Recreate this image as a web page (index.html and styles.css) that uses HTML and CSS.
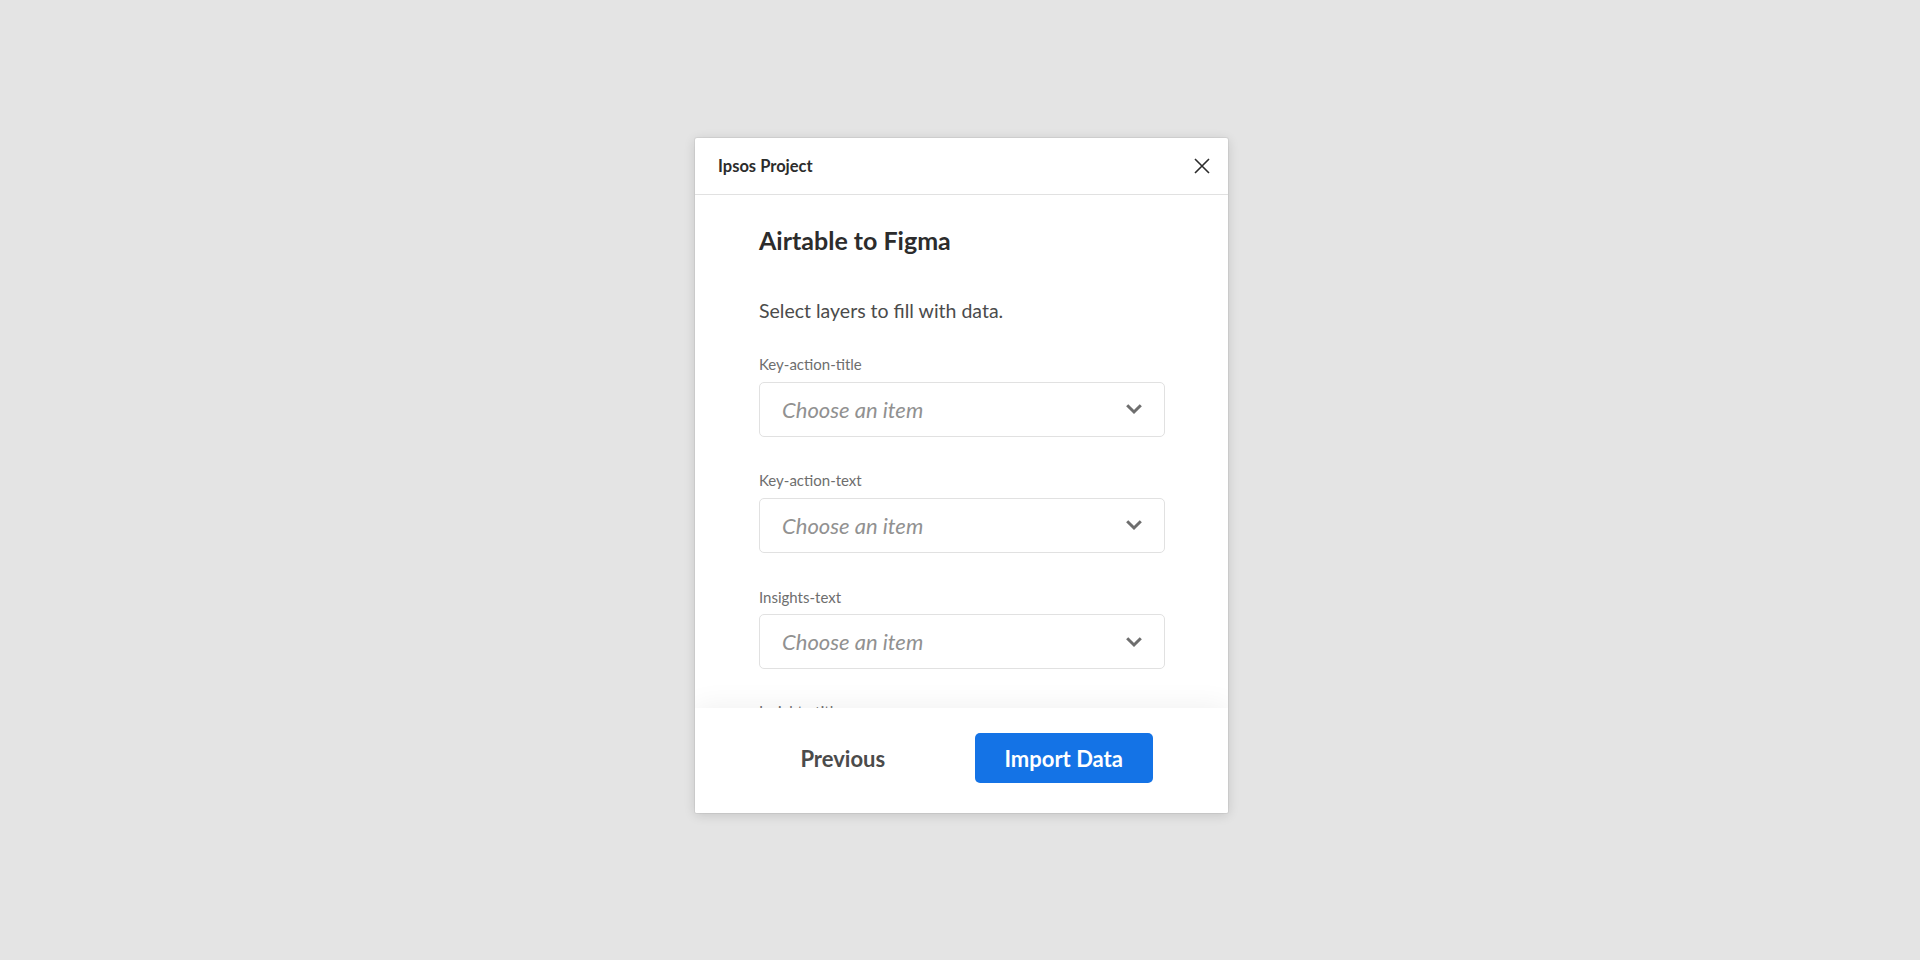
FILE: index.html
```html
<!DOCTYPE html>
<html lang="en">
<head>
<meta charset="utf-8">
<title>Airtable to Figma</title>
<link rel="stylesheet" href="styles.css">
</head>
<body>
<div class="stage">
  <div class="dialog">
    <div class="dialog-header">
      <span class="dialog-name">Ipsos Project</span>
      <button class="close-btn" aria-label="Close">
        <svg width="16" height="16" viewBox="0 0 16 16"><path d="M1 1 L15 15 M15 1 L1 15" stroke="#2c2c2c" stroke-width="1.6" fill="none"/></svg>
      </button>
    </div>
    <div class="dialog-body">
      <h1 class="title">Airtable to Figma</h1>
      <p class="intro">Select layers to fill with data.</p>
      <div class="field">
        <div class="label">Key-action-title</div>
        <div class="picker"><span class="placeholder">Choose an item</span><svg class="chev" width="18" height="12" viewBox="0 0 18 12"><path d="M2.2 2.2 L9 9 L15.8 2.2" stroke="#6e6e6e" stroke-width="3" fill="none" stroke-linejoin="miter"/></svg></div>
      </div>
      <div class="field">
        <div class="label">Key-action-text</div>
        <div class="picker"><span class="placeholder">Choose an item</span><svg class="chev" width="18" height="12" viewBox="0 0 18 12"><path d="M2.2 2.2 L9 9 L15.8 2.2" stroke="#6e6e6e" stroke-width="3" fill="none" stroke-linejoin="miter"/></svg></div>
      </div>
      <div class="field">
        <div class="label">Insights-text</div>
        <div class="picker"><span class="placeholder">Choose an item</span><svg class="chev" width="18" height="12" viewBox="0 0 18 12"><path d="M2.2 2.2 L9 9 L15.8 2.2" stroke="#6e6e6e" stroke-width="3" fill="none" stroke-linejoin="miter"/></svg></div>
      </div>
      <div class="field field-last">
        <div class="label">Insights-title</div>
      </div>
    </div>
    <div class="dialog-footer">
      <button class="btn btn-quiet">Previous</button>
      <button class="btn btn-primary">Import Data</button>
    </div>
  </div>
</div>
</body>
</html>
```
FILE: styles.css
```css
* { box-sizing: border-box; }
html, body { margin: 0; padding: 0; }
body {
  background: #e4e4e4;
  font-family: "Lato", "Open Sans", sans-serif;
  width: 1920px;
  height: 960px;
  overflow: hidden;
}
.stage {
  height: 960px;
  display: flex;
  justify-content: center;
  align-items: flex-start;
  padding-top: 138px;
  padding-left: 3px;
}
.dialog {
  width: 533px;
  height: 675px;
  background: #fff;
  border-radius: 2px;
  box-shadow: 0 0 0 1px rgba(0,0,0,0.05), 0 2px 12px rgba(0,0,0,0.14);
  display: flex;
  flex-direction: column;
  overflow: hidden;
}
.dialog-header {
  height: 57px;
  flex: none;
  border-bottom: 1px solid #e1e1e1;
  display: flex;
  align-items: center;
  justify-content: space-between;
  padding: 0 18px 0 23px;
}
.dialog-name {
  font-size: 16.5px;
  font-weight: 700;
  color: #2c2c2c;
}
.close-btn {
  border: 0;
  background: transparent;
  padding: 0;
  width: 16px;
  height: 16px;
  display: flex;
  cursor: pointer;
}
.dialog-body {
  flex: 1;
  overflow: hidden;
  padding: 30px 63px 0 64px;
}
.title {
  margin: 0;
  font-size: 25px;
  line-height: 30px;
  font-weight: 700;
  color: #2c2c2c;
}
.intro {
  margin: 44px 0 32px;
  font-size: 19.5px;
  line-height: 24px;
  color: #4b4b4b;
}
.field { margin-bottom: 34.6px; }
.field-last { margin-top: -1.5px; }
.label {
  font-size: 15px;
  line-height: 18px;
  color: #6e6e6e;
  margin-bottom: 8.7px;
}
.picker {
  height: 55px;
  border: 1px solid #e1e1e1;
  border-radius: 5px;
  display: flex;
  align-items: center;
  justify-content: space-between;
  padding: 0 21px 0 22px;
}
.placeholder {
  font-size: 22px;
  font-style: italic;
  color: #919191;
}
.chev { flex: none; }
.dialog-footer {
  flex: none;
  height: 105px;
  background: #fff;
  position: relative;
  box-shadow: 0 0 28px rgba(0,0,0,0.07);
  display: flex;
  align-items: flex-start;
  gap: 43.5px;
  padding: 25px 0 0 59px;
}
.btn {
  width: 177.5px;
  height: 50px;
  border: 0;
  border-radius: 5px;
  font-family: "Lato", "Open Sans", sans-serif;
  font-size: 22px;
  font-weight: 700;
  cursor: pointer;
}
.btn-quiet {
  background: transparent;
  color: #4b4b4b;
}
.btn-primary {
  background: #1473e6;
  color: #fff;
}
```
